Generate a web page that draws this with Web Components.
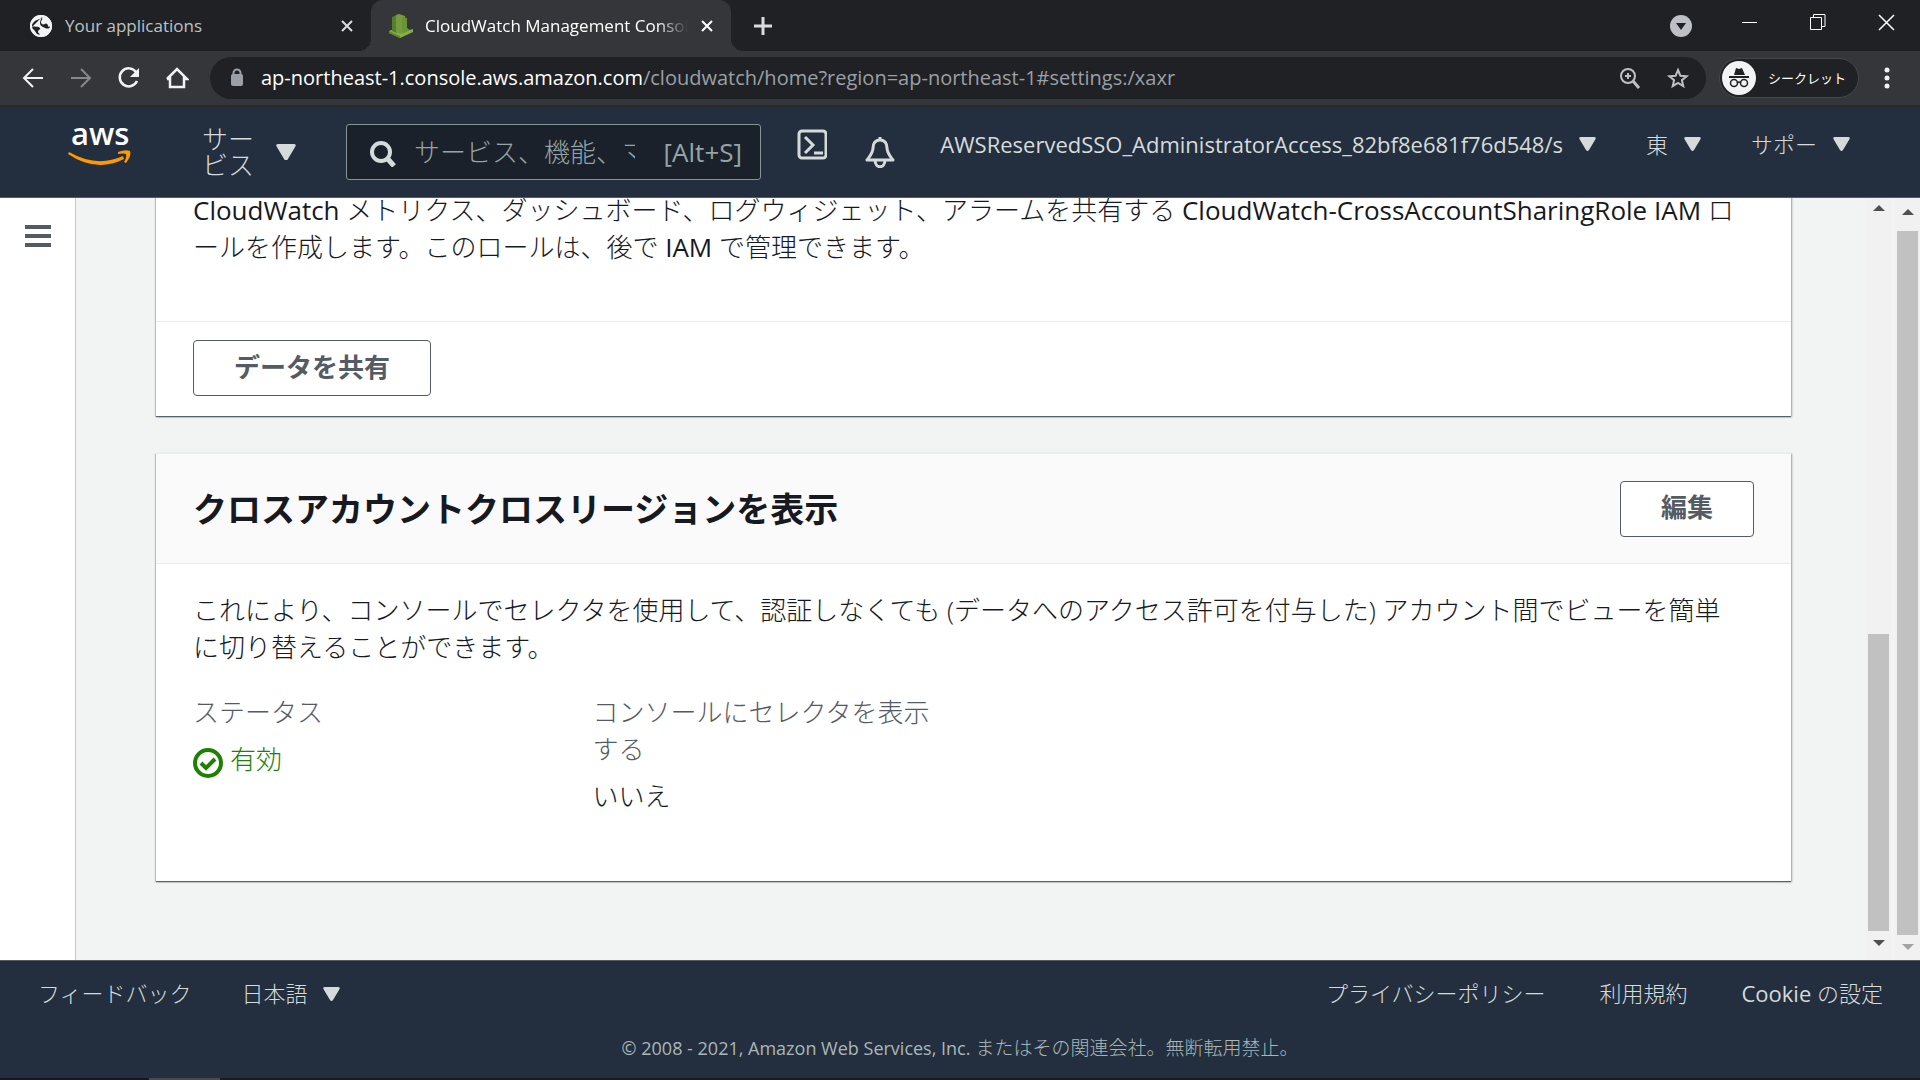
<!DOCTYPE html>
<html lang="ja">
    <head>
        <meta charset="UTF-8" />
        <meta name="viewport" content="width=device-width, initial-scale=1.0" />
        <title>CloudWatch Management Console</title>
        <style>
            html,
            body {
                margin: 0;
                height: 100%;
                overflow: hidden;
            }

            body {
                display: flex;
                flex-direction: column;
                background: #232f3e;
                color: #16191f;
                font-family: "Open Sans", "Noto Sans CJK JP", sans-serif;
                font-size: 26px;
                font-weight: 300;
                line-height: 37px;
            }

            p {
                margin: 0;
                padding-right: 12px;
            }

            /* Latin words run heavier than the kana around them */
            .latin {
                font-weight: 400;
            }
        </style>
    </head>
    <body>
        <browser-tabs></browser-tabs>
        <browser-toolbar></browser-toolbar>
        <console-nav></console-nav>
        <console-main>
            <console-card>
                <p>
                    <span class="latin">CloudWatch</span> メトリクス、ダッシュボード、ログウィジェット、アラームを共有する
                    <span class="latin">CloudWatch-CrossAccountSharingRole IAM</span> ロールを作成します。このロールは、後で
                    <span class="latin">IAM</span> で管理できます。
                </p>
                <console-button slot="footer">データを共有</console-button>
            </console-card>
            <console-card heading="クロスアカウントクロスリージョンを表示">
                <console-button slot="action">編集</console-button>
                <p>これにより、コンソールでセレクタを使用して、認証しなくても (データへのアクセス許可を付与した) アカウント間でビューを簡単に切り替えることができます。</p>
                <key-values>
                    <key-value label="ステータス"><status-text>有効</status-text></key-value>
                    <key-value label="コンソールにセレクタを表示する">いいえ</key-value>
                </key-values>
            </console-card>
        </console-main>
        <console-footer></console-footer>

        <template id="browser-tabs">
            <style>
                :host {
                    display: flex;
                    align-items: center;
                    flex: none;
                    height: 51px;
                    padding-left: 11px;
                    background: #202124;
                    color: #bdc1c6;
                    font-size: 17px;
                    font-weight: 400;
                }
                button {
                    display: flex;
                    padding: 0;
                    border: 0;
                    background: none;
                    color: inherit;
                }
                .tab {
                    display: flex;
                    align-items: center;
                    box-sizing: border-box;
                    height: 51px;
                    width: 360px;
                    padding: 0 17px 0 18px;
                    gap: 12px;
                }
                .title {
                    flex: 1;
                    overflow: hidden;
                    white-space: nowrap;
                }
                .active {
                    position: relative;
                    border-radius: 12px 12px 0 0;
                    background: #35363a;
                    color: #fff;
                }
                .active .title {
                    mask-image: linear-gradient(to right, #000 88%, transparent);
                }
                .active::before,
                .active::after {
                    content: "";
                    position: absolute;
                    bottom: 0;
                    width: 12px;
                    height: 12px;
                }
                .active::before {
                    right: 100%;
                    background: radial-gradient(circle at 0 0, transparent 12px, #35363a 12px);
                }
                .active::after {
                    left: 100%;
                    background: radial-gradient(circle at 100% 0, transparent 12px, #35363a 12px);
                }
                .add {
                    margin-left: 22px;
                }
                .window {
                    display: flex;
                    align-items: center;
                    gap: 48px;
                    margin-left: auto;
                    padding-right: 24px;
                    color: #fff;
                }
            </style>
            <div class="tab">
                <svg width="24" height="24" viewBox="0 0 24 24">
                    <circle cx="12" cy="12" r="11" fill="#f1f3f4" />
                    <path d="M13 3c-1 3-6 2-8 5-2 2-3 3-3 4 3 1 8 0 9 2 1 1-2 2-2 4 0 1 2 1 2 4l-3-1c-1-3-3-6-6-7" fill="#202124" />
                    <path d="M13 3c1 2-1 4-1 5 0 2 2 3 4 2 1-1 3 0 3 2 0 1 1 1 3 0-1 3-4 3-6 2s-5-2-5-5c0-2 1-4 2-6z" fill="#202124" />
                    <circle cx="12" cy="12" r="10" fill="none" stroke="#f1f3f4" stroke-width="2" />
                </svg>
                <span class="title">Your applications</span>
                <button aria-label="閉じる">
                    <svg width="14" height="14" viewBox="0 0 14 14" stroke="#dadce0" stroke-width="2"><path d="M2 2l10 10M12 2L2 12" /></svg>
                </button>
            </div>
            <div class="tab active">
                <svg width="24" height="26" viewBox="0 0 24 26">
                    <path d="M0 18l5-2 9 3 10-3v3l-13 6-11-5z" fill="#86b04a" />
                    <path d="M0 18l11 5v2L0 20z" fill="#5d8a2c" />
                    <path d="M3 4l5-2v18l-5-2z" fill="#567f2a" />
                    <path d="M7 2l3-1 6 2v17l-4 1-5-2z" fill="#759c3e" />
                    <path d="M13 4l5 1v10l3 2-6 3-2-1z" fill="#6a9434" />
                </svg>
                <span class="title">CloudWatch Management Console</span>
                <button aria-label="閉じる">
                    <svg width="14" height="14" viewBox="0 0 14 14" stroke="#fff" stroke-width="2"><path d="M2 2l10 10M12 2L2 12" /></svg>
                </button>
            </div>
            <button class="add" aria-label="新しいタブ">
                <svg width="20" height="20" viewBox="0 0 20 20" stroke="#dadce0" stroke-width="3"><path d="M10 1v18M1 10h18" /></svg>
            </button>
            <div class="window">
                <button aria-label="タブを検索">
                    <svg width="22" height="22" viewBox="0 0 22 22"><circle cx="11" cy="11" r="11" fill="#bdc1c6" /><path d="M6 8h10l-5 7z" fill="#202124" /></svg>
                </button>
                <button aria-label="最小化">
                    <svg width="20" height="30" viewBox="0 0 20 30"><path d="M2 11h15v1H2z" fill="#fff" /></svg>
                </button>
                <button aria-label="元に戻す">
                    <svg width="20" height="30" viewBox="0 0 20 30" fill="none" stroke="#fff"><path d="M2.500 6.500h11v12h-11zM5.500 6V3.500h11.500v12h-3" /></svg>
                </button>
                <button aria-label="ウィンドウを閉じる">
                    <svg width="20" height="30" viewBox="0 0 20 30" stroke="#fff" stroke-width="1.500"><path d="M3 4l15 15M18 4L3 19" /></svg>
                </button>
            </div>
        </template>

        <template id="browser-toolbar">
            <style>
                :host {
                    display: flex;
                    align-items: center;
                    flex: none;
                    height: 54px;
                    padding: 0 27px 0 21px;
                    border-bottom: 2px solid #28292c;
                    background: #35363a;
                    color: #fff;
                    font-size: 20px;
                    font-weight: 400;
                    line-height: 28px;
                }
                button {
                    display: flex;
                    align-items: center;
                    padding: 0;
                    border: 0;
                    background: none;
                    color: inherit;
                    font: inherit;
                }
                .keys {
                    display: flex;
                    gap: 24px;
                }
                .address {
                    display: flex;
                    align-items: center;
                    flex: 1;
                    box-sizing: border-box;
                    height: 42px;
                    margin: 0 13px 0 21px;
                    padding: 0 16px 0 18px;
                    border-radius: 21px;
                    background: #202124;
                }
                .url {
                    flex: 1;
                    margin-left: 15px;
                    white-space: nowrap;
                    overflow: hidden;
                }
                .path {
                    color: #9aa0a6;
                }
                .tools {
                    display: flex;
                    gap: 24px;
                }
                .incognito {
                    box-sizing: border-box;
                    height: 40px;
                    width: 140px;
                    gap: 12px;
                    padding: 0 2px;
                    border: 1px solid #46474b;
                    border-radius: 20px;
                    background: #202124;
                    font-size: 13px;
                    white-space: nowrap;
                }
                .more {
                    margin-left: 22px;
                }
            </style>
            <div class="keys">
                <button aria-label="戻る">
                    <svg width="24" height="24" viewBox="0 0 24 24" fill="none" stroke="#f1f3f4" stroke-width="2"><path d="M22 12H3M12 3l-9 9 9 9" /></svg>
                </button>
                <button aria-label="進む">
                    <svg width="24" height="24" viewBox="0 0 24 24" fill="none" stroke="#86888a" stroke-width="2"><path d="M2 12h19M12 3l9 9-9 9" /></svg>
                </button>
                <button aria-label="再読み込み">
                    <svg width="24" height="24" viewBox="0 0 24 24"><path d="M20 15a9 9 0 1 1-1-9" fill="none" stroke="#f1f3f4" stroke-width="2.500" /><path d="M22 2v9h-9z" fill="#f1f3f4" /></svg>
                </button>
                <button aria-label="ホーム">
                    <svg width="24" height="24" viewBox="0 0 24 24" fill="none" stroke="#f1f3f4" stroke-width="2.500"><path d="M5 11v10h14V11M2 13L12 3l10 10h-3M2 13h3" /></svg>
                </button>
            </div>
            <div class="address">
                <svg width="18" height="20" viewBox="0 0 18 20"><rect x="3" y="6" width="12" height="12" rx="2" fill="#9aa0a6" /><path d="M5.500 7V5a3.500 3.500 0 0 1 7 0v2" fill="none" stroke="#9aa0a6" stroke-width="2" /></svg>
                <div class="url" role="textbox" aria-label="アドレス" contenteditable="true" spellcheck="false">ap-northeast-1.console.aws.amazon.com<span class="path">/cloudwatch/home?region=ap-northeast-1#settings:/xaxr</span></div>
                <div class="tools">
                    <button aria-label="ズーム">
                        <svg width="24" height="24" viewBox="0 0 24 24" fill="none" stroke="#bdc1c6" stroke-width="2"><circle cx="10" cy="10" r="7" /><path d="M10 7v6M7 10h6" /><path d="M15 15l6 7" stroke-width="3" /></svg>
                    </button>
                    <button aria-label="ブックマーク">
                        <svg width="24" height="24" viewBox="0 0 24 24" fill="none" stroke="#bdc1c6" stroke-width="2"><path d="M12 4l2.400 5.700 6.200.500-4.700 4 1.400 6L12 17l-5.300 3.200 1.400-6-4.700-4 6.200-.500z" /></svg>
                    </button>
                </div>
            </div>
            <button class="incognito">
                <svg width="34" height="34" viewBox="0 0 34 34">
                    <circle cx="17" cy="17" r="17" fill="#f1f3f4" />
                    <path d="M12 14l2-7 3 1 3-1 3 7zM7 15h20v2H7z" fill="#202124" />
                    <g fill="none" stroke="#202124" stroke-width="1.500"><circle cx="12" cy="22" r="3.500" /><circle cx="22" cy="22" r="3.500" /><path d="M15 22q2-2 4 0" /></g>
                </svg>
                シークレット
            </button>
            <button class="more" aria-label="メニュー">
                <svg width="12" height="22" viewBox="0 0 12 22" fill="#f1f3f4"><circle cx="6" cy="3" r="2.500" /><circle cx="6" cy="11" r="2.500" /><circle cx="6" cy="19" r="2.500" /></svg>
            </button>
        </template>

        <template id="drop-caret">
            <style>
                :host {
                    display: inline-flex;
                    width: 17px;
                }
                :host([large]) {
                    width: 20px;
                }
                svg {
                    width: 100%;
                }
            </style>
            <svg viewBox="0 0 17 14"><path d="M2 0h13q3 0 1 3l-6 10q-1.500 2-3 0L1 3q-2-3 1-3z" fill="#d5dbdb" /></svg>
        </template>

        <template id="console-nav">
            <style>
                :host {
                    display: flex;
                    align-items: center;
                    flex: none;
                    box-sizing: border-box;
                    height: 91px;
                    padding: 0 70px 0 68px;
                    border-bottom: 1px solid #545b64;
                    background: #232f3e;
                    color: #d5dbdb;
                    font-size: 22px;
                }
                a,
                svg {
                    display: block;
                }
                button {
                    display: flex;
                    align-items: center;
                    gap: 16px;
                    padding: 0;
                    border: 0;
                    background: none;
                    color: inherit;
                    font: inherit;
                    white-space: nowrap;
                }
                .services {
                    gap: 22px;
                    margin-left: 70px;
                    font-size: 26px;
                    line-height: 26px;
                    text-align: left;
                }
                .search {
                    display: flex;
                    align-items: center;
                    box-sizing: border-box;
                    width: 415px;
                    height: 56px;
                    margin-left: 50px;
                    padding: 0 18px 0 22px;
                    border: 1px solid #879596;
                    border-radius: 3px;
                    background: #1a212b;
                    color: #95a5a6;
                    font-size: 26px;
                    font-weight: 400;
                }
                input {
                    flex: 1;
                    min-width: 0;
                    margin: 0 29px 0 17px;
                    padding: 0;
                    border: 0;
                    outline: 0;
                    background: none;
                    color: #d5dbdb;
                    font: inherit;
                    font-weight: 300;
                }
                input::placeholder {
                    color: #95a5a6;
                }
                .icons {
                    display: flex;
                    align-items: center;
                    gap: 37px;
                    margin: 0 auto 0 36px;
                }
                .menus {
                    display: flex;
                    gap: 50px;
                    padding-bottom: 16px;
                }
                .account {
                    font-weight: 400;
                }
            </style>
            <a href="#" aria-label="AWS">
                <svg width="64" height="66" viewBox="0 -6 64 66">
                    <text x="3" y="20" fill="#fff" font-size="31" font-weight="600">aws</text>
                    <path d="M1 27q28 16 54 4l1 3Q28 48 0 29z" fill="#ff9900" />
                    <path d="M50 27q8-3 12-1 2 4-4 12l-2-1q3-5 2-8-2-1-8 0z" fill="#ff9900" />
                </svg>
            </a>
            <button class="services"><span>サー<br />ビス</span><drop-caret large></drop-caret></button>
            <label class="search">
                <svg width="28" height="30" viewBox="0 0 28 30" fill="none" stroke="#d5dbdb" stroke-width="4"><circle cx="12" cy="15" r="9" /><path d="M18 21l7 8" stroke-width="5" /></svg>
                <input type="text" placeholder="サービス、機能、マ" aria-label="検索" />
                [Alt+S]
            </label>
            <div class="icons">
                <button aria-label="CloudShell">
                    <svg width="30" height="50" viewBox="0 0 30 50" fill="none" stroke="#d5dbdb" stroke-width="3"><rect x="2" y="4" width="27" height="27" rx="3" /><path d="M8 10l8 8-8 8M17 26h9" /></svg>
                </button>
                <button aria-label="通知">
                    <svg width="32" height="32" viewBox="0 0 32 32" fill="none" stroke="#d5dbdb" stroke-width="3" stroke-linejoin="round"><path d="M16 1v3M16 4c-5 0-7 4-7 8 0 5-3 8-6 12h26c-3-4-6-7-6-12 0-4-2-8-7-8zM11 24c0 9 10 9 10 0" /></svg>
                </button>
            </div>
            <div class="menus">
                <button class="account">AWSReservedSSO_AdministratorAccess_82bf8e681f76d548/s<drop-caret></drop-caret></button>
                <button>東<drop-caret></drop-caret></button>
                <button>サポー<drop-caret></drop-caret></button>
            </div>
        </template>

        <template id="console-main">
            <style>
                :host {
                    display: flex;
                    flex: 1;
                    min-height: 0;
                    background: #f2f3f3;
                }
                nav {
                    box-sizing: border-box;
                    width: 76px;
                    padding: 25px 24px;
                    border-right: 1px solid #c3cacb;
                    background: #fff;
                }
                button {
                    display: flex;
                    padding: 0;
                    border: 0;
                    background: none;
                }
                /* scrolled to its end: the first card runs out at the top */
                main {
                    display: flex;
                    flex: 1;
                    flex-direction: column;
                    justify-content: flex-end;
                    gap: 37px;
                    min-width: 0;
                    padding: 0 75px 79px 80px;
                    overflow: hidden;
                }
                scroll-bar + scroll-bar {
                    margin-left: 4px;
                }
            </style>
            <nav>
                <button aria-label="ナビゲーションを開く">
                    <svg width="28" height="26" viewBox="0 0 28 26" fill="#545b64"><path d="M1 2h26v4H1zM1 11h26v4H1zM1 20h26v4H1z" /></svg>
                </button>
            </nav>
            <main><slot></slot></main>
            <scroll-bar style="--before: 413; --thumb: 297; --end: 4px; --down: #505050"></scroll-bar>
            <scroll-bar style="--before: 7; --thumb: 704; --top: 6px; --down: #a3a3a3"></scroll-bar>
        </template>

        <template id="scroll-bar">
            <style>
                :host {
                    display: flex;
                    flex-direction: column;
                    align-items: center;
                    flex: none;
                    box-sizing: border-box;
                    width: 25px;
                    padding-top: var(--top, 2px);
                    padding-bottom: var(--end, 0);
                    background: #f1f1f1;
                }
                svg {
                    flex: none;
                }
                .before {
                    flex: var(--before) 0 0;
                }
                .thumb {
                    flex: var(--thumb) 0 0;
                    width: 21px;
                    background: #c1c1c1;
                }
                .down {
                    fill: var(--down);
                }
            </style>
            <svg width="12" height="20" viewBox="0 0 12 20" fill="#505050"><path d="M0 11l6-6 6 6z" /></svg>
            <div class="before"></div>
            <div class="thumb"></div>
            <svg class="down" width="12" height="25" viewBox="0 0 12 25"><path d="M0 9h12l-6 6z" /></svg>
        </template>

        <template id="console-card">
            <style>
                :host {
                    display: block;
                    flex: none;
                    border-top: 1px solid #eaeded;
                    background: #fff;
                    box-shadow: 0 1px 1px 0 rgba(0, 28, 36, 0.5), 1px 1px 2px 0 rgba(0, 28, 36, 0.3), -1px 1px 1px 0 rgba(0, 28, 36, 0.15);
                }
                header {
                    display: flex;
                    align-items: center;
                    justify-content: space-between;
                    box-sizing: border-box;
                    height: 110px;
                    padding: 0 37px;
                    border-bottom: 1px solid #eaeded;
                    background: #fafafa;
                }
                h2 {
                    margin: 0;
                    font-size: 34px;
                    font-weight: 700;
                    line-height: 40px;
                }
                .body {
                    padding: 28px 37px 66px;
                }
                .body.short {
                    padding-bottom: 55px;
                }
                footer {
                    padding: 18px 37px 20px;
                    border-top: 1px solid #eaeded;
                }
                ::slotted(console-button) {
                    vertical-align: top;
                }
            </style>
            <header>
                <h2></h2>
                <slot name="action"></slot>
            </header>
            <div class="body"><slot></slot></div>
            <footer><slot name="footer"></slot></footer>
        </template>

        <template id="console-button">
            <style>
                :host {
                    display: inline-flex;
                }
                button {
                    box-sizing: border-box;
                    height: 56px;
                    padding: 0 40px 2px;
                    border: 1px solid #545b64;
                    border-radius: 4px;
                    background: #fff;
                    color: #545b64;
                    font: inherit;
                    font-weight: 700;
                }
            </style>
            <button><slot></slot></button>
        </template>

        <template id="key-values">
            <style>
                :host {
                    display: grid;
                    grid-template-columns: repeat(4, 1fr);
                    gap: 37px;
                    margin-top: 28px;
                }
            </style>
            <slot></slot>
        </template>

        <template id="key-value">
            <style>
                :host {
                    display: flex;
                    flex-direction: column;
                    gap: 10px;
                }
                .label {
                    color: #545b64;
                }
            </style>
            <div class="label"></div>
            <div><slot></slot></div>
        </template>

        <template id="status-text">
            <style>
                :host {
                    display: flex;
                    align-items: flex-end;
                    gap: 7px;
                    color: #1d8102;
                }
            </style>
            <svg width="30" height="30" viewBox="0 0 30 30" fill="none" stroke="#1d8102"><circle cx="15" cy="15" r="13" stroke-width="4" /><path d="M8 15l5 5 9-9" stroke-width="4" /></svg>
            <slot></slot>
        </template>

        <template id="console-footer">
            <style>
                :host {
                    display: flex;
                    flex-direction: column;
                    flex: none;
                    box-sizing: border-box;
                    height: 120px;
                    border-top: 1px solid #545b64;
                    background: #232f3e;
                    color: #d5dbdb;
                    font-size: 22px;
                }
                .links {
                    display: flex;
                    align-items: center;
                    padding: 14px 37px 0 38px;
                }
                .right {
                    display: flex;
                    gap: 54px;
                    margin-left: auto;
                }
                a {
                    color: inherit;
                    text-decoration: none;
                }
                button {
                    display: flex;
                    align-items: center;
                    gap: 15px;
                    margin-left: 50px;
                    padding: 0;
                    border: 0;
                    background: none;
                    color: inherit;
                    font: inherit;
                }
                .latin {
                    font-weight: 400;
                }
                small {
                    margin-top: 18px;
                    color: #aab7b8;
                    font-size: 19px;
                    text-align: center;
                }
                small .latin {
                    font-size: 18px;
                }
                .edge {
                    height: 2px;
                    margin-top: auto;
                    background: linear-gradient(to right, #1c1819 149px, #4c4a4d 149px 220px, #1c1c1e 220px);
                }
            </style>
            <div class="links">
                <a href="#">フィードバック</a>
                <button>日本語<drop-caret></drop-caret></button>
                <div class="right">
                    <a href="#">プライバシーポリシー</a>
                    <a href="#">利用規約</a>
                    <a href="#"><span class="latin">Cookie</span> の設定</a>
                </div>
            </div>
            <small><span class="latin">© 2008 - 2021, Amazon Web Services, Inc.</span> またはその関連会社。無断転用禁止。</small>
            <div class="edge"></div>
        </template>

        <script>
            // Base class: clones the template whose id is the tag name
            class TemplateElement extends HTMLElement {
                constructor() {
                    super();
                    const template = document.getElementById(this.localName);
                    this.attachShadow({ mode: "open" }).appendChild(template.content.cloneNode(true));
                }
            }

            class ConsoleCard extends TemplateElement {
                connectedCallback() {
                    const heading = this.getAttribute("heading");
                    if (heading) {
                        this.shadowRoot.querySelector("h2").textContent = heading;
                    } else {
                        this.shadowRoot.querySelector("header").remove();
                    }

                    if (this.querySelector("[slot=footer]")) {
                        this.shadowRoot.querySelector(".body").classList.add("short");
                    } else {
                        this.shadowRoot.querySelector("footer").remove();
                    }
                }
            }

            class KeyValue extends TemplateElement {
                connectedCallback() {
                    this.shadowRoot.querySelector(".label").textContent = this.getAttribute("label");
                }
            }

            customElements.define("drop-caret", class extends TemplateElement {});
            customElements.define("scroll-bar", class extends TemplateElement {});
            customElements.define("browser-tabs", class extends TemplateElement {});
            customElements.define("browser-toolbar", class extends TemplateElement {});
            customElements.define("console-nav", class extends TemplateElement {});
            customElements.define("console-main", class extends TemplateElement {});
            customElements.define("console-card", ConsoleCard);
            customElements.define("console-button", class extends TemplateElement {});
            customElements.define("key-values", class extends TemplateElement {});
            customElements.define("key-value", KeyValue);
            customElements.define("status-text", class extends TemplateElement {});
            customElements.define("console-footer", class extends TemplateElement {});
        </script>
    </body>
</html>
